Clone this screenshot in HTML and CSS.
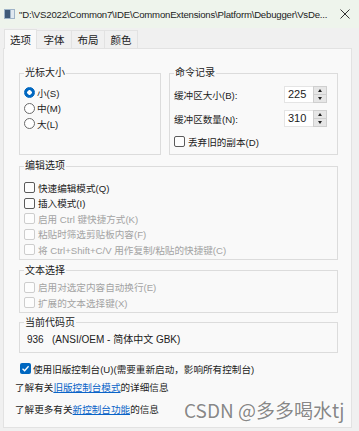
FILE: index.html
```html
<!DOCTYPE html>
<html lang="zh-CN">
<head>
    <meta charset="UTF-8">
    <meta name="viewport" content="width=device-width, initial-scale=1.0">
    <title>控制台属性</title>
    <link rel="stylesheet" href="styles.css">
</head>
<body>

<div class="titlebar">
    <svg class="app-icon" viewBox="0 0 11 10">
        <rect x="0" y="0" width="11" height="10" fill="#9fb4c8"/>
        <rect x="1" y="1" width="5" height="8" fill="#3f5a78"/>
        <rect x="7" y="1" width="3" height="8" fill="#dfe8f0"/>
    </svg>
    <span class="title">"D:\VS2022\Common7\IDE\CommonExtensions\Platform\Debugger\VsDe...</span>
    <svg class="close" viewBox="0 0 10 10">
        <path d="M0.5 0.5 L9.5 9.5 M9.5 0.5 L0.5 9.5" stroke="#333" stroke-width="1" fill="none"/>
    </svg>
</div>

<div class="tabs">
    <div class="tab active">选项</div>
    <div class="tab wide">字体</div>
    <div class="tab">布局</div>
    <div class="tab">颜色</div>
</div>

<div class="panel">
    <div class="row">
        <fieldset class="group cursor-size">
            <legend>光标大小</legend>
            <div class="items">
                <label class="opt"><span class="radio checked"></span>小(S)</label>
                <label class="opt"><span class="radio"></span>中(M)</label>
                <label class="opt"><span class="radio"></span>大(L)</label>
            </div>
        </fieldset>
        <fieldset class="group history">
            <legend>命令记录</legend>
            <div class="field">
                <span>缓冲区大小(B):</span>
                <span class="spin"><span class="spin-val">225</span><span class="spin-btns"><i class="up"></i><i class="down"></i></span></span>
            </div>
            <div class="field">
                <span>缓冲区数量(N):</span>
                <span class="spin"><span class="spin-val">310</span><span class="spin-btns"><i class="up"></i><i class="down"></i></span></span>
            </div>
            <label class="opt discard"><span class="box"></span>丢弃旧的副本(D)</label>
        </fieldset>
    </div>

    <fieldset class="group edit">
        <legend>编辑选项</legend>
        <div class="items">
            <label class="opt"><span class="box"></span>快速编辑模式(Q)</label>
            <label class="opt"><span class="box"></span>插入模式(I)</label>
            <label class="opt disabled"><span class="box"></span>启用 Ctrl 键快捷方式(K)</label>
            <label class="opt disabled"><span class="box"></span>粘贴时筛选剪贴板内容(F)</label>
            <label class="opt disabled"><span class="box"></span>将 Ctrl+Shift+C/V 用作复制/粘贴的快捷键(C)</label>
        </div>
    </fieldset>

    <fieldset class="group select">
        <legend>文本选择</legend>
        <div class="items">
            <label class="opt disabled"><span class="box"></span>启用对选定内容自动换行(E)</label>
            <label class="opt disabled"><span class="box"></span>扩展的文本选择键(X)</label>
        </div>
    </fieldset>

    <fieldset class="group codepage">
        <legend>当前代码页</legend>
        <div class="codepage-val">936&nbsp;&nbsp;&nbsp;(ANSI/OEM - 简体中文 GBK)</div>
    </fieldset>

    <label class="opt legacy"><span class="box checked"><svg viewBox="0 0 10 10"><path d="M2.3 5.2 L4.2 7 L7.8 3" stroke="#fff" stroke-width="1.2" fill="none"/></svg></span>使用旧版控制台(U)(需要重新启动，影响所有控制台)</label>
    <p class="info first">了解有关<a href="#">旧版控制台模式</a>的详细信息</p>
    <p class="info">了解更多有关<a href="#">新控制台功能</a>的信息</p>
</div>

<div class="watermark">CSDN @多多喝水tj</div>

</body>
</html>
```

FILE: styles.css
```css
body {
    margin: 0;
    width: 359px;
    height: 431px;
    overflow: hidden;
    position: relative;
    background-color: #f0f0f0;
    font-family: "Liberation Sans", "Noto Sans CJK SC", sans-serif;
    font-size: 9.6px;
    color: #1b1b1b;
}
.titlebar {
    height: 28px;
    background-color: #eef4ec;
    display: flex;
    align-items: center;
    padding: 0 9px 0 4px;
}
.app-icon {
    width: 11px;
    height: 10px;
    margin-right: 4px;
    flex-shrink: 0;
}
.title {
    flex: 1;
    min-width: 0;
    white-space: nowrap;
    overflow: hidden;
    font-size: 9.6px;
    letter-spacing: -0.2px;
    color: #222;
}
.close {
    width: 10px;
    height: 10px;
    margin-left: 6px;
    flex-shrink: 0;
}
.tabs {
    display: flex;
    padding: 2px 0 0 4px;
    height: 18px;
}
.tab {
    width: 33px;
    line-height: 18px;
    font-size: 10.5px;
    text-align: center;
    border: 1px solid #e2e2e2;
    border-bottom: none;
    border-left: none;
    box-sizing: border-box;
}
.tab.wide {
    width: 35px;
}
.tab.active {
    background-color: #f9f9f9;
    border-left: 1px solid #e2e2e2;
    margin-top: -1px;
    height: 20px;
    line-height: 20px;
}
.panel {
    margin: 0 7px 0 3px;
    height: 380px;
    box-sizing: border-box;
    background-color: #f9f9f9;
    border: 1px solid #e2e2e2;
    padding: 17px 13px 0 15px;
}
.row {
    display: flex;
    gap: 8px;
    height: 89px;
}
.group {
    margin: 0;
    min-width: 0;
    padding: 0 5px 0 4px;
    border: 1px solid #dcdcdc;
}
.group legend {
    padding: 0 1px;
    line-height: 14px;
    font-size: 10px;
}
.cursor-size {
    width: 142px;
    box-sizing: border-box;
}
.history {
    flex: 1;
    padding-right: 10px;
}
.items {
    padding-top: 5px;
}
.opt {
    display: flex;
    align-items: center;
    height: 15.5px;
    white-space: nowrap;
}
.radio {
    width: 9px;
    height: 9px;
    border: 1px solid #6a6a6a;
    border-radius: 50%;
    margin-right: 2px;
    background-color: #fff;
    flex-shrink: 0;
}
.radio.checked {
    border-color: #0067c0;
    background: radial-gradient(circle, #fff 0 2px, #0067c0 2.5px);
}
.box {
    width: 9px;
    height: 9px;
    border: 1px solid #5a5a5a;
    border-radius: 2px;
    margin-right: 3px;
    background-color: #fdfdfd;
    flex-shrink: 0;
}
.disabled {
    color: #a3a3a3;
}
.disabled .box {
    border-color: #cdcdcd;
}
.field {
    display: flex;
    align-items: center;
    justify-content: space-between;
    height: 17px;
    margin-top: 6px;
}
.field + .field {
    margin-top: 7px;
}
.spin {
    display: flex;
    height: 17px;
}
.spin-val {
    width: 29px;
    box-sizing: border-box;
    background-color: #fff;
    border: 1px solid #e4e4e4;
    border-right: none;
    padding-left: 3px;
    line-height: 15px;
    font-size: 11px;
}
.spin-btns {
    width: 14px;
    box-sizing: border-box;
    border: 1px solid #cfcfcf;
    background-color: #e6e6e6;
    display: flex;
    flex-direction: column;
}
.spin-btns i {
    flex: 1;
    position: relative;
}
.spin-btns .up {
    border-bottom: 1px solid #cfcfcf;
}
.spin-btns i::after {
    content: "";
    position: absolute;
    left: 4px;
    top: 2px;
    border-left: 2.5px solid transparent;
    border-right: 2.5px solid transparent;
}
.spin-btns .up::after {
    border-bottom: 3px solid #222;
}
.spin-btns .down::after {
    border-top: 3px solid #222;
}
.discard {
    margin-top: 7px;
}
.edit {
    margin-top: 4px;
}
.edit .items {
    padding-top: 7px;
    padding-bottom: 1px;
}
.select {
    margin-top: 4px;
}
.select .items {
    padding-top: 2px;
    padding-bottom: 1px;
}
.codepage {
    margin-top: 3px;
}
.codepage-val {
    line-height: 15.5px;
    padding: 2px 0 5px 3px;
    font-size: 10px;
}
.legacy {
    margin-top: 8px;
    margin-left: 1px;
}
.box.checked {
    width: 11px;
    height: 11px;
    border: none;
    background-color: #0067c0;
    margin-right: 2px;
}
.box.checked svg {
    display: block;
    width: 11px;
    height: 11px;
}
.info {
    margin: 3px 0 0 -4px;
    line-height: 15.5px;
}
.info + .info {
    margin-top: 7px;
}
.info a {
    color: #0a64c8;
    text-decoration: underline;
}
.watermark {
    position: absolute;
    left: 184px;
    top: 398px;
    font-family: "Noto Sans CJK SC", sans-serif;
    font-size: 19px;
    line-height: 24px;
    color: rgba(120, 120, 120, 0.9);
    text-shadow: 0 0 2px #fff, 0 0 1px #fff;
    white-space: nowrap;
}
```
